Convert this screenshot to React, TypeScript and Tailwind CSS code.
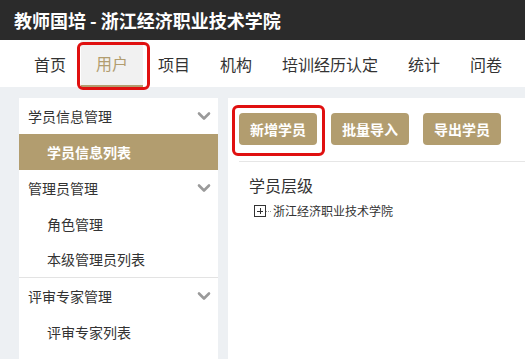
const navItems = ['首页', '用户', '项目', '机构', '培训经历认定', '统计', '问卷'];

function Chevron() {
  return (
    <svg width="14" height="14" viewBox="0 0 14 14" className="text-[#9a9a9a]">
      <polyline points="2,4.5 7,9.5 12,4.5" fill="none" stroke="currentColor" strokeWidth="2.6" strokeLinecap="round" strokeLinejoin="round" />
    </svg>
  );
}

export default function App() {
  return (
    <div
      className="w-[525px] h-[359px] overflow-hidden bg-[#edf0f3] text-[#333]"
      style={{ fontFamily: '"Noto Sans CJK SC", "Noto Sans", sans-serif' }}
    >
      {/* Top title bar */}
      <div className="h-[40px] bg-[#2b2b2b] flex items-center pl-[14px] text-white text-[18px] font-bold leading-none">
        教师国培 - 浙江经济职业技术学院
      </div>

      {/* Nav */}
      <div className="h-[47px] bg-white flex pl-[19px]">
        {navItems.map((item) => {
          const active = item === '用户';
          return (
            <div
              key={item}
              className={
                active
                  ? 'relative px-[15px] flex items-center text-[16px] bg-[#f1f1f1] text-[#b29d6f] border-b-2 border-[#b29d6f]'
                  : 'px-[15px] flex items-center text-[16px] text-[#333]'
              }
            >
              {item}
              {active && (
                <div className="absolute left-[-4px] right-[-7px] top-[2px] bottom-[-5px] border-[3px] border-[#e01010] rounded-[6px]" />
              )}
            </div>
          );
        })}
      </div>

      <div className="flex pt-[11px] pl-[19px] gap-[10px]">
        {/* Sidebar */}
        <div className="w-[199px] h-[270px] bg-white text-[14px]">
          <div className="h-[36px] flex items-center justify-between pl-[9px] pr-[7px]">
            <span>学员信息管理</span>
            <Chevron />
          </div>
          <div className="h-[36px] flex items-center pl-[28px] bg-[#b29d6f] text-white font-bold">
            学员信息列表
          </div>
          <div className="h-[36px] flex items-center justify-between pl-[9px] pr-[7px]">
            <span>管理员管理</span>
            <Chevron />
          </div>
          <div className="h-[36px] flex items-center pl-[28px]">角色管理</div>
          <div className="h-[36px] flex items-center pl-[28px] border-b border-[#e3e3e3]">本级管理员列表</div>
          <div className="h-[36px] flex items-center justify-between pl-[9px] pr-[7px]">
            <span>评审专家管理</span>
            <Chevron />
          </div>
          <div className="h-[36px] flex items-center pl-[28px]">评审专家列表</div>
        </div>

        {/* Main */}
        <div className="flex-1 h-[270px] bg-white pl-[11px] pt-[15px]">
          <div className="flex gap-[14px] pb-[16px] border-b border-[#e6e6e6]">
            <button className="relative w-[78px] h-[32px] rounded-[4px] bg-[#b29d6f] text-white text-[14px] font-bold">
              新增学员
              <span className="absolute left-[-7px] right-[-8px] top-[-8px] bottom-[-11px] border-[3px] border-[#e01010] rounded-[6px]" />
            </button>
            <button className="w-[78px] h-[32px] rounded-[4px] bg-[#b29d6f] text-white text-[14px] font-bold">批量导入</button>
            <button className="w-[78px] h-[32px] rounded-[4px] bg-[#b29d6f] text-white text-[14px] font-bold">导出学员</button>
          </div>
          <div className="pl-[10px] pt-[12px]">
            <div className="text-[16px] leading-[22px]">学员层级</div>
            <div className="flex items-center mt-[6px] pl-[5px] text-[12px]">
              <span className="w-[12px] h-[12px] border border-[#333] relative">
                <span className="absolute left-[2px] top-[4.5px] w-[6px] h-px bg-[#333]" />
                <span className="absolute left-[4.5px] top-[2px] w-px h-[6px] bg-[#333]" />
              </span>
              <span className="w-[5px] border-t border-dotted border-[#999] mr-[2px]" />
              <span>浙江经济职业技术学院</span>
            </div>
          </div>
        </div>
      </div>
    </div>
  );
}
